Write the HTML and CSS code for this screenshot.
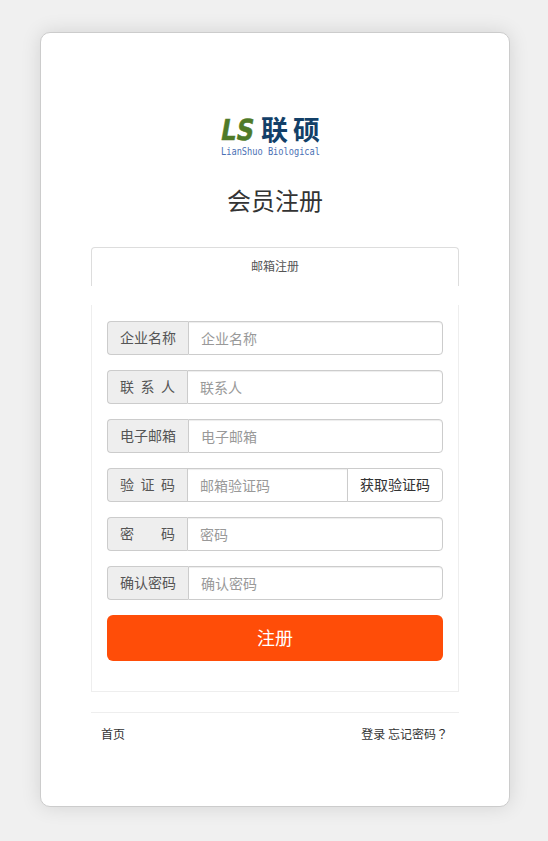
FILE: index.html
```
<!DOCTYPE html>
<html lang="zh-CN">
<head>
  <meta charset="UTF-8" />
  <title>会员注册</title>
  <link rel="stylesheet" href="styles.css">
</head>
<body>

  <div class="container">
    <div class="logo">
      <svg width="104" height="46" viewBox="0 0 104 46">
        <text class="logo-ls" transform="translate(0.5 28) skewX(-10)" textLength="33" lengthAdjust="spacingAndGlyphs">LS</text>
        <text class="logo-cn" x="42" y="28">联</text>
        <text class="logo-cn" x="74" y="28">硕</text>
        <text class="logo-en" x="2" y="43" textLength="99" lengthAdjust="spacingAndGlyphs">LianShuo Biological</text>
      </svg>
    </div>
    <h1 class="title">会员注册</h1>

    <div class="tab">邮箱注册</div>

    <form class="panel">
      <div class="input-group">
        <label class="addon" for="company">企业名称</label>
        <input class="control" id="company" type="text" placeholder="企业名称">
      </div>
      <div class="input-group">
        <label class="addon spaced" for="contact">联 系 人</label>
        <input class="control" id="contact" type="text" placeholder="联系人">
      </div>
      <div class="input-group">
        <label class="addon" for="email">电子邮箱</label>
        <input class="control" id="email" type="text" placeholder="电子邮箱">
      </div>
      <div class="input-group">
        <label class="addon spaced" for="code">验 证 码</label>
        <input class="control with-btn" id="code" type="text" placeholder="邮箱验证码">
        <button class="code-btn" type="button">获取验证码</button>
      </div>
      <div class="input-group">
        <label class="addon spaced" for="pwd">密 码</label>
        <input class="control" id="pwd" type="password" placeholder="密码">
      </div>
      <div class="input-group">
        <label class="addon" for="pwd2">确认密码</label>
        <input class="control" id="pwd2" type="password" placeholder="确认密码">
      </div>
      <button class="submit" type="button">注册</button>
    </form>

    <div class="links">
      <a href="#">首页</a>
      <div>
        <a href="#">登录</a>
        <a href="#">忘记密码<span class="mark" lang="zh-TW">？</span></a>
      </div>
    </div>
  </div>

</body>
</html>
```
FILE: styles.css
```
* {
  box-sizing: border-box;
}
body {
  margin: 0;
  padding: 32px 38px 34px 40px;
  background: #f0f0f0;
  color: #333;
  font-family: "Noto Sans CJK SC", sans-serif;
  font-size: 14px;
}
.container {
  width: 470px;
  height: 775px;
  padding: 79px 50px 0;
  background: #fff;
  border: 1px solid #ccc;
  border-radius: 10px;
  box-shadow: 0 0 20px rgba(0,0,0,0.12);
}
.logo {
  height: 46px;
  padding-left: 128px;
}
.logo svg {
  display: block;
  overflow: visible;
}
.logo-ls {
  font: bold 29px "DejaVu Sans", sans-serif;
  fill: #4f7a28;
  stroke: #4f7a28;
  stroke-width: 0.5;
}
.logo-cn {
  font: bold 27px "Noto Sans CJK SC", sans-serif;
  fill: #123f68;
}
.logo-en {
  font: 10px "DejaVu Sans Mono", monospace;
  fill: #4a70b4;
}
.title {
  margin: 22px 0 0;
  font-size: 24px;
  font-weight: 400;
  line-height: 40px;
  text-align: center;
}
.tab {
  height: 39px;
  margin-top: 27px;
  border: 1px solid #ddd;
  border-bottom: 0;
  border-radius: 4px 4px 0 0;
  color: #555;
  font-size: 12px;
  line-height: 36px;
  text-align: center;
}
.panel {
  height: 387px;
  margin: 19px 0 0;
  padding: 16px 15px 0;
  border: 1px solid #eee;
  border-top: 0;
}
.input-group {
  display: flex;
  height: 34px;
  margin-bottom: 15px;
}
.addon {
  width: 81px;
  padding: 0 12px;
  background: #eee;
  border: 1px solid #ccc;
  border-right: 0;
  border-radius: 4px 0 0 4px;
  color: #555;
  line-height: 30px;
  white-space: nowrap;
}
.addon.spaced {
  width: 80px;
  text-align-last: justify;
}
.control {
  flex: 1;
  min-width: 0;
  padding: 0 12px;
  background: #fff;
  border: 1px solid #ccc;
  border-radius: 0 4px 4px 0;
  box-shadow: inset 0 1px 1px rgba(0,0,0,0.075);
  font: inherit;
}
.control.with-btn {
  border-radius: 0;
}
.control::placeholder {
  color: #999;
}
.code-btn {
  width: 96px;
  margin-left: -1px;
  padding: 0 0 2px;
  background: #fff;
  border: 1px solid #ccc;
  border-radius: 0 4px 4px 0;
  color: #333;
  font: inherit;
}
.submit {
  display: block;
  width: 100%;
  height: 46px;
  padding: 0 0 2px;
  background: #ff4d08;
  border: 0;
  border-radius: 6px;
  color: #fff;
  font: inherit;
  font-size: 18px;
}
.links {
  display: flex;
  justify-content: space-between;
  margin-top: 20px;
  padding: 11px 11px 0 10px;
  border-top: 1px solid #eee;
  font-size: 12px;
  line-height: 20px;
}
.links a {
  color: #333;
  text-decoration: none;
}
.mark {
  font-family: "Noto Sans CJK TC", sans-serif;
}
```
